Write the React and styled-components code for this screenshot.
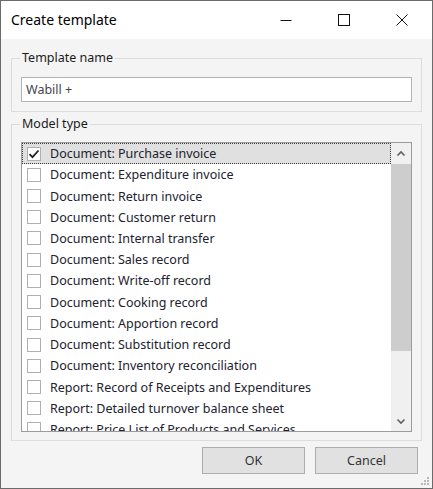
import React from "react";
import styled, { createGlobalStyle } from "styled-components";

const Global = createGlobalStyle`
  html, body { margin: 0; padding: 0; background: #ffffff; }
  * { box-sizing: border-box; }
`;

const Window = styled.div`
  width: 433px;
  height: 489px;
  border: 1px solid #6b6b6b;
  background: #f4f4f4;
  display: flex;
  flex-direction: column;
  font-family: "Noto Sans", "Open Sans", sans-serif;
  font-size: 12px;
  color: #1b1b1b;
  position: relative;
`;

const TitleBar = styled.div`
  height: 38px;
  background: #ffffff;
  display: flex;
  align-items: center;
  padding-left: 10px;
  padding-right: 1px;
`;

const Title = styled.div`
  flex: 1;
  font-size: 14px;
  color: #000;
  margin-top: -1px;
`;

const CaptionButton = styled.div`
  width: 58px;
  height: 38px;
  display: flex;
  align-items: center;
  justify-content: center;
`;

const Body = styled.div`
  flex: 1;
  display: flex;
  flex-direction: column;
  padding: 11px 10px 0 10px;
`;

const Group = styled.fieldset`
  margin: ${(p) => p.$mt || 0}px 0 0 0;
  padding: 0 9px ${(p) => p.$pb || 9}px 9px;
  border: 1px solid #dcdcdc;
  min-width: 0;
`;

const Legend = styled.legend`
  padding: 0 2px;
  margin-left: -1px;
  line-height: 16px;
  font-size: 12.5px;
  color: #1b1b1b;
`;

const TextInput = styled.div`
  margin-top: 11px;
  height: 25px;
  border: 1px solid #b4b4b4;
  background: #fff;
  display: flex;
  align-items: center;
  padding-left: 4px;
  font-size: 12.5px;
  color: #454552;
`;

const List = styled.div`
  margin-top: 10px;
  height: 290px;
  border: 1px solid #9c9c9c;
  background: #fff;
  display: flex;
  overflow: hidden;
`;

const Items = styled.div`
  flex: 1;
  overflow: hidden;
`;

const Row = styled.div`
  height: 21.23px;
  display: flex;
  align-items: center;
  padding-left: 4px;
  gap: 9px;
  white-space: nowrap;
  background: ${(p) => (p.$selected ? "#e0e0e0" : "transparent")};
  border: 1px dotted ${(p) => (p.$selected ? "#3c3c3c" : "transparent")};
  font-size: 12.5px;
  color: #22222e;
`;

const Box = styled.div`
  width: 14px;
  height: 14px;
  border: 1px solid #b0b0b0;
  background: #fff;
  display: flex;
  align-items: center;
  justify-content: center;
  flex: none;
`;

const ScrollBar = styled.div`
  width: 20px;
  background: #f0f0f0;
  display: flex;
  flex-direction: column;
`;

const Arrow = styled.div`
  height: 21px;
  display: flex;
  align-items: center;
  justify-content: center;
`;

const Thumb = styled.div`
  height: 187px;
  background: #cdcdcd;
`;

const Track = styled.div`
  flex: 1;
`;

const Footer = styled.div`
  display: flex;
  justify-content: flex-end;
  gap: 10px;
  margin-top: 6px;
  padding-right: 4px;
`;

const Button = styled.div`
  width: 103px;
  height: 27px;
  background: #e1e1e1;
  border: 1px solid #adadad;
  display: flex;
  align-items: center;
  justify-content: center;
  font-size: 12.5px;
  color: #333;
`;

const Grip = styled.svg`
  position: absolute;
  right: 2px;
  bottom: 2px;
`;

const items = [
  "Document: Purchase invoice",
  "Document: Expenditure invoice",
  "Document: Return invoice",
  "Document: Customer return",
  "Document: Internal transfer",
  "Document: Sales record",
  "Document: Write-off record",
  "Document: Cooking record",
  "Document: Apportion record",
  "Document: Substitution record",
  "Document: Inventory reconciliation",
  "Report: Record of Receipts and Expenditures",
  "Report: Detailed turnover balance sheet",
  "Report: Price List of Products and Services",
];

export default function App() {
  return (
    <>
      <Global />
      <Window>
        <TitleBar>
          <Title>Create template</Title>
          <CaptionButton>
            <svg width="12" height="12" viewBox="0 0 12 12">
              <path d="M0.5 6.5H11.5" stroke="#111" strokeWidth="1" />
            </svg>
          </CaptionButton>
          <CaptionButton>
            <svg width="12" height="12" viewBox="0 0 12 12">
              <rect x="0.5" y="0.5" width="11" height="11" fill="none" stroke="#111" />
            </svg>
          </CaptionButton>
          <CaptionButton>
            <svg width="12" height="12" viewBox="0 0 12 12">
              <path d="M0.5 0.5L11.5 11.5M11.5 0.5L0.5 11.5" stroke="#111" strokeWidth="1" />
            </svg>
          </CaptionButton>
        </TitleBar>
        <Body>
          <Group>
            <Legend>Template name</Legend>
            <TextInput>Wabill +</TextInput>
          </Group>
          <Group $mt={4} $pb={8}>
            <Legend>Model type</Legend>
            <List>
              <Items>
                {items.map((t, i) => (
                  <Row key={t} $selected={i === 0}>
                    <Box>
                      {i === 0 && (
                        <svg width="12" height="12" viewBox="0 0 12 12">
                          <path d="M1.5 6.2L4.5 9.2L10.5 2.5" fill="none" stroke="#222" strokeWidth="1.8" />
                        </svg>
                      )}
                    </Box>
                    {t}
                  </Row>
                ))}
              </Items>
              <ScrollBar>
                <Arrow>
                  <svg width="10" height="8" viewBox="0 0 10 8">
                    <path d="M1.5 5.5L5 2L8.5 5.5" fill="none" stroke="#606060" strokeWidth="1.6" />
                  </svg>
                </Arrow>
                <Thumb />
                <Track />
                <Arrow>
                  <svg width="10" height="8" viewBox="0 0 10 8">
                    <path d="M1.5 2.5L5 6L8.5 2.5" fill="none" stroke="#606060" strokeWidth="1.6" />
                  </svg>
                </Arrow>
              </ScrollBar>
            </List>
          </Group>
          <Footer>
            <Button>OK</Button>
            <Button>Cancel</Button>
          </Footer>
        </Body>
        <Grip width="10" height="10" viewBox="0 0 10 10">
          <g fill="#b8b8b8">
            <rect x="7" y="1" width="2" height="2" />
            <rect x="4" y="4" width="2" height="2" />
            <rect x="7" y="4" width="2" height="2" />
            <rect x="1" y="7" width="2" height="2" />
            <rect x="4" y="7" width="2" height="2" />
            <rect x="7" y="7" width="2" height="2" />
          </g>
        </Grip>
      </Window>
    </>
  );
}
